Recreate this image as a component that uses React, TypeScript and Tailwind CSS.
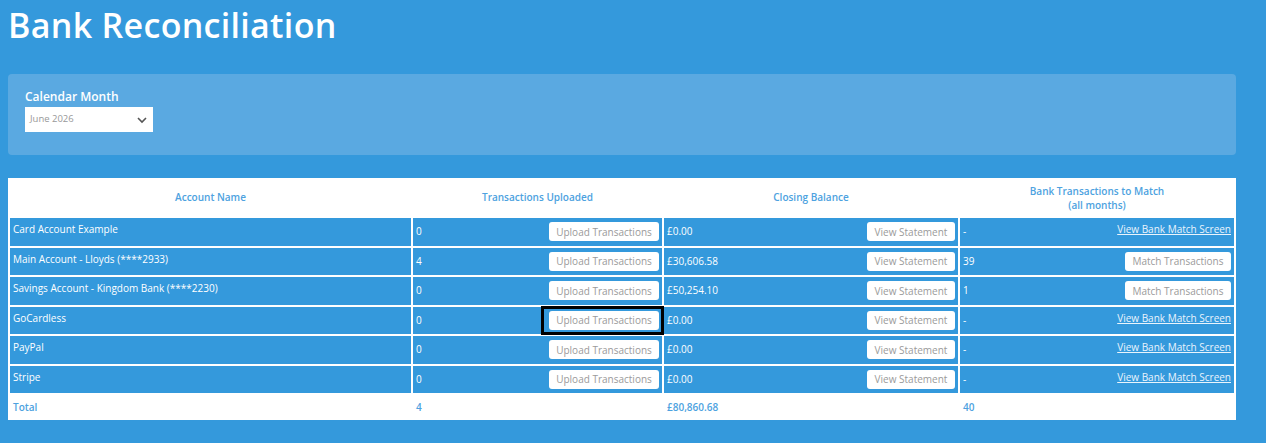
import React from "react";

const rows = [
  { name: "Card Account Example", up: "0", bal: "£0.00", match: "-", link: true },
  { name: "Main Account - Lloyds (****2933)", up: "4", bal: "£30,606.58", match: "39", link: false },
  { name: "Savings Account - Kingdom Bank (****2230)", up: "0", bal: "£50,254.10", match: "1", link: false },
  { name: "GoCardless", up: "0", bal: "£0.00", match: "-", link: true, focus: true },
  { name: "PayPal", up: "0", bal: "£0.00", match: "-", link: true },
  { name: "Stripe", up: "0", bal: "£0.00", match: "-", link: true },
];

function Btn({ children, w }: { children: React.ReactNode; w: string }) {
  return (
    <span
      className={`${w} h-[19px] bg-white rounded-[3px] text-[#9a9a9a] text-[10px] flex items-center justify-center leading-none`}
    >
      {children}
    </span>
  );
}

export default function App() {
  return (
    <div
      className="w-[1266px] h-[443px] bg-[#3499dc] overflow-hidden text-white"
      style={{ fontFamily: '"Open Sans", "Liberation Sans", sans-serif' }}
    >
      <h1 className="pl-[8px] pt-[2px] text-[34px] font-semibold leading-[46px] tracking-[0.3px]">
        Bank Reconciliation
      </h1>
      <div className="ml-[8px] w-[1228px] mt-[26px] h-[81px] rounded-[4px] bg-[#5aa9e1] pl-[17px] pt-[15px]">
        <div className="text-[12px] font-semibold leading-[16px]">Calendar Month</div>
        <div className="mt-[2px] w-[128px] h-[25px] bg-white flex items-center justify-between pl-[5px] pr-[4px]">
          <span className="text-[9.5px] text-[#999]">June 2026</span>
          <svg width="14" height="14" viewBox="0 0 14 14">
            <path d="M3 5 L7 9 L11 5" fill="none" stroke="#555" strokeWidth="1.6" />
          </svg>
        </div>
      </div>
      <div className="ml-[8px] w-[1228px] mt-[23px] bg-white p-[2px] pt-[1px] pb-[1px] grid grid-cols-[401px_249px_294px_274px] gap-x-[2px] gap-y-[2px] text-[10px]">
        {["Account Name", "Transactions Uploaded", "Closing Balance"].map((h) => (
          <div key={h} className="h-[37px] flex items-center justify-center text-[#4da2e0] font-semibold">
            {h}
          </div>
        ))}
        <div className="h-[37px] flex flex-col items-center justify-center text-[#4da2e0] font-semibold leading-[14px]">
          <span>Bank Transactions to Match</span>
          <span>(all months)</span>
        </div>
        {rows.map((r) => (
          <React.Fragment key={r.name}>
            <div className="h-[27.5px] bg-[#3499dc] pl-[3px] pt-[4px] leading-[14px]">{r.name}</div>
            <div className="relative h-[27.5px] bg-[#3499dc] pl-[3px] pr-[3px] flex items-center justify-between">
              <span>{r.up}</span>
              <Btn w="w-[110px]">Upload Transactions</Btn>
              {r.focus && (
                <div className="absolute left-[128px] -top-[1px] w-[123px] h-[29px] border-[3px] border-black" />
              )}
            </div>
            <div className="h-[27.5px] bg-[#3499dc] pl-[3px] pr-[3px] flex items-center justify-between">
              <span>{r.bal}</span>
              <Btn w="w-[88px]">View Statement</Btn>
            </div>
            <div className="h-[27.5px] bg-[#3499dc] pl-[3px] pr-[3px] flex items-center justify-between">
              <span>{r.match}</span>
              {r.link ? (
                <span className="underline self-start pt-[4px] leading-[14px] text-[#eaf4fc]">View Bank Match Screen</span>
              ) : (
                <Btn w="w-[106px]">Match Transactions</Btn>
              )}
            </div>
          </React.Fragment>
        ))}
        {["Total", "4", "£80,860.68", "40"].map((t) => (
          <div key={t} className="h-[24px] flex items-center pl-[3px] text-[#4da2e0] font-semibold">
            {t}
          </div>
        ))}
      </div>
    </div>
  );
}
